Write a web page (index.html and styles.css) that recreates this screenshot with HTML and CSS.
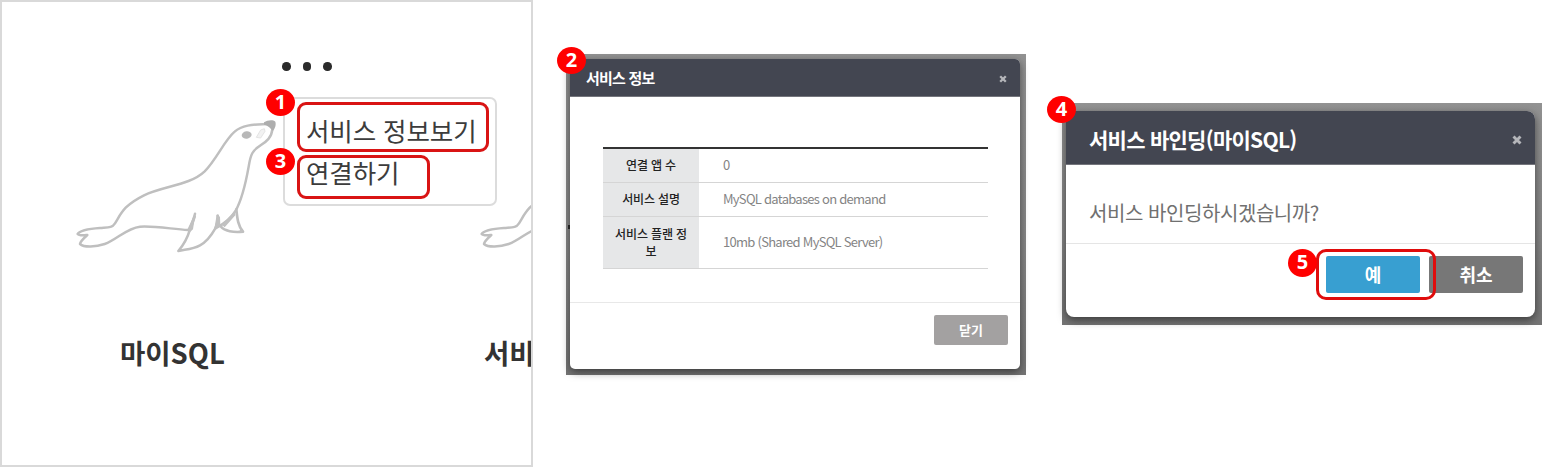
FILE: index.html
```
<!DOCTYPE html>
<html lang="ko">
<head>
<meta charset="utf-8">
<title>서비스</title>
<link rel="stylesheet" href="styles.css">
</head>
<body>
<svg class="symbols" aria-hidden="true">
  <symbol id="seal" viewBox="48 54 606 408">
    <g fill="none" stroke="#bfbfbf" stroke-width="7.5" stroke-linecap="round" stroke-linejoin="round">
      <path d="M622 72C590 74 550 72 524 95C493 121 470 178 434 214C390 256 310 258 252 286C190 317 184 340 165 370C156 384 145 382 120 384C90 386 60 391 53 402C58 408 72 406 82 405C72 414 61 424 60 432C72 443 108 441 134 432C172 418 200 384 240 380C285 377 340 388 384 390"/>
      <path d="M637 88C635 112 620 124 602 136C577 152 572 162 566 200C556 256 545 300 527 332C512 358 492 372 466 385C452 410 440 425 420 436C398 448 376 448 355 453C371 434 382 415 389 391C394 372 402 356 405 341"/>
      <path d="M473 347C475 362 472 373 466 385M482 379C492 394 522 398 549 395C534 378 532 356 529 328M404 350L391 388" stroke-width="8"/>
    </g>
    <path d="M383 386L407 337L399 388L386 400ZM470 345L480 350L481 378L462 392ZM485 374L525 332L526 346L494 382ZM543 386L552 398L535 398Z" fill="#c1c1c1"/>
    <path d="M612 67C622 61 638 58 646 65C649 74 645 86 639 92C630 86 629 78 612 74Z" fill="#aeaeae"/>
    <ellipse cx="560" cy="105" rx="15" ry="11" transform="rotate(-8 560 105)" fill="#b8b8b8"/>
    <path d="M602 90L613 86L615 94L602 114L589 112Z" fill="#f2f2f2" stroke="#e4e4e4" stroke-width="3"/>
  </symbol>
  <symbol id="close" viewBox="0 0 8 8">
    <path d="M1.2 1.2L6.8 6.8M6.8 1.2L1.2 6.8" stroke="#b5b6ba" stroke-width="2.3"/>
  </symbol>
</svg>
<main class="board">
  <section class="catalog">
    <article class="tile">
      <div class="dots"><i></i><i></i><i></i></div>
      <svg class="seal"><use href="#seal"/></svg>
      <h2 class="name">마이SQL</h2>
    </article>
    <article class="tile tile-next">
      <svg class="seal"><use href="#seal"/></svg>
      <h2 class="name name-next">서비</h2>
    </article>
    <ul class="menu">
      <li class="item item-info"><span class="badge b1">1</span>서비스 정보보기</li>
      <li class="item item-bind"><span class="badge b3">3</span>연결하기</li>
    </ul>
  </section>

  <section class="backdrop info">
    <span class="badge b2">2</span>
    <span class="speck"></span>
    <div class="modal">
      <header class="head"><h3>서비스 정보</h3><svg class="close"><use href="#close"/></svg></header>
      <div class="body">
        <table class="table">
          <tr class="r1"><th>연결 앱 수</th><td>0</td></tr>
          <tr class="r2"><th>서비스 설명</th><td class="desc">MySQL databases on demand</td></tr>
          <tr class="r3"><th>서비스 플랜 정<br>보</th><td class="plan">10mb (Shared MySQL Server)</td></tr>
        </table>
      </div>
      <footer class="foot"><button class="btn grey">닫기</button></footer>
    </div>
  </section>

  <section class="backdrop bind">
    <span class="badge b4">4</span>
    <div class="modal">
      <header class="head"><h3>서비스 바인딩(마이SQL)</h3><svg class="close"><use href="#close"/></svg></header>
      <p class="question">서비스 바인딩하시겠습니까?</p>
      <footer class="foot">
        <button class="btn blue">예</button>
        <button class="btn dark">취소</button>
        <span class="mark"><span class="badge b5">5</span></span>
      </footer>
    </div>
  </section>
</main>
</body>
</html>
```
FILE: styles.css
```
* { box-sizing: border-box; margin: 0; padding: 0; }
body {
  width: 1542px; height: 467px; overflow: hidden; background: #fff;
  font-family: "Noto Sans CJK KR", "Noto Sans", sans-serif;
}
.symbols { position: absolute; width: 0; height: 0; }
.board { display: flex; align-items: flex-start; height: 467px; }

.catalog {
  position: relative; display: flex; gap: 64px; flex: none;
  width: 533px; height: 467px; border: 2px solid #d9d9d9; overflow: hidden; margin-right: 33px;
}
.tile { flex: none; width: 340px; display: flex; flex-direction: column; padding-top: 60px; }
.tile-next { padding-top: 116px; }
.dots { display: flex; gap: 12px; height: 56px; padding-left: 280px; }
.dots i { width: 8.5px; height: 8.5px; border-radius: 50%; background: #2b2b2b; }
.seal { flex: none; width: 202px; height: 136px; margin-left: 74px; }
.name {
  margin-top: 78px; padding-left: 118px; line-height: 40px; white-space: nowrap;
  font-size: 27.5px; font-weight: 700; color: #333;
}
.name-next { padding-left: 78px; }

.menu {
  position: absolute; left: 281px; top: 95px; width: 214px; height: 109px; list-style: none;
  border: 2px solid #dcdcdc; border-radius: 7px; padding: 3px 0 0 12px; background: #fff;
}
.item {
  position: relative; border: 3px solid #d91414; border-radius: 9px; padding-left: 6px;
  font-size: 25.5px; color: #3c3c3c; white-space: nowrap; letter-spacing: -.1px;
}
.item-info { width: 192px; height: 50px; line-height: 49px; }
.item-bind { width: 133px; height: 44px; line-height: 28px; margin-top: 3px; }

.badge {
  position: absolute; z-index: 2; width: 29px; height: 27px; border-radius: 50%; background: #f00;
  color: #fff; font: 700 20px/26px "Noto Sans", sans-serif; text-align: center; letter-spacing: 0;
}
.b1 { left: -34px; top: -16px; }
.b3 { left: -34px; top: -10px; }
.b2 { left: -9px; top: -7px; }
.b4 { left: -15px; top: -7px; }
.b5 { left: -31px; top: -3px; height: 28px; }

.backdrop { position: relative; flex: none; background: linear-gradient(#929292, #858585 60%, #747474); }
.modal { background: #fff; overflow: hidden; box-shadow: 0 3px 8px rgba(0,0,0,.5); }
.head { display: flex; align-items: center; justify-content: space-between; background: #434651; color: #fff; border-bottom: 1px solid #74757c; }
.head h3 { font-weight: 700; white-space: nowrap; }
.btn { border: 0; border-radius: 2px; color: #fff; font-family: inherit; font-weight: 700; }

.info { width: 460px; height: 321px; margin: 54px 36px 0 0; padding: 5px 6px 6px 4px; }
.speck { position: absolute; left: 2px; top: 171px; width: 2px; height: 4px; background: #222; }
.info .modal { height: 310px; border-radius: 5px; }
.info .head { height: 38px; padding: 0 13px 1px 16px; }
.info h3 { font-size: 15px; letter-spacing: -.8px; }
.info .close { width: 8px; height: 8px; margin-top: 3px; }
.info .body { height: 206px; padding: 50px 33px 0; border-bottom: 1px solid #e8e8e8; }
.table { width: 385px; border-collapse: collapse; table-layout: fixed; border-top: 2px solid #333; }
.table tr { border-bottom: 1px solid #d5d5d5; }
.table th { width: 96px; background: #e6e7e8; font-size: 12px; line-height: 17px; font-weight: 500; color: #222; letter-spacing: -.15px; padding-bottom: 1px; }
.table td { padding: 0 0 2px 24px; font-size: 13px; line-height: 17px; color: #848484; letter-spacing: -.73px; }
.r1 { height: 34px; } .r2 { height: 34px; } .r3 { height: 52px; }
.info .foot { display: flex; justify-content: flex-end; padding: 12px 12px; }
.grey { width: 74px; height: 30px; background: #a3a1a1; font-size: 13px; line-height: 30px; }

.bind { width: 480px; height: 222px; margin-top: 103px; padding: 8px 7px 8px 3px; }
.bind .modal { height: 206px; border-radius: 8px; margin-left: 1px; overflow: visible; }
.bind .head { height: 54px; padding: 2px 13px 0 23px; border-radius: 8px 8px 0 0; }
.bind h3 { font-size: 21px; letter-spacing: -.73px; }
.bind .close { width: 10px; height: 10px; margin-top: 3px; }
.question { height: 79px; padding: 30px 0 0 23px; border-bottom: 1px solid #e5e5e5; font-size: 20px; line-height: 36px; color: #707070; white-space: nowrap; letter-spacing: -.43px; }
.bind .foot { position: relative; display: flex; justify-content: flex-end; gap: 9px; padding: 12px 12px 0; }
.bind .btn { width: 94px; height: 37px; font-size: 18px; line-height: 37px; }
.blue { background: #389fd1; }
.dark { background: #777; }
.mark { position: absolute; left: 250px; top: 5px; width: 120px; height: 51px; border: 3px solid #e00c0c; border-radius: 10px; }
```
